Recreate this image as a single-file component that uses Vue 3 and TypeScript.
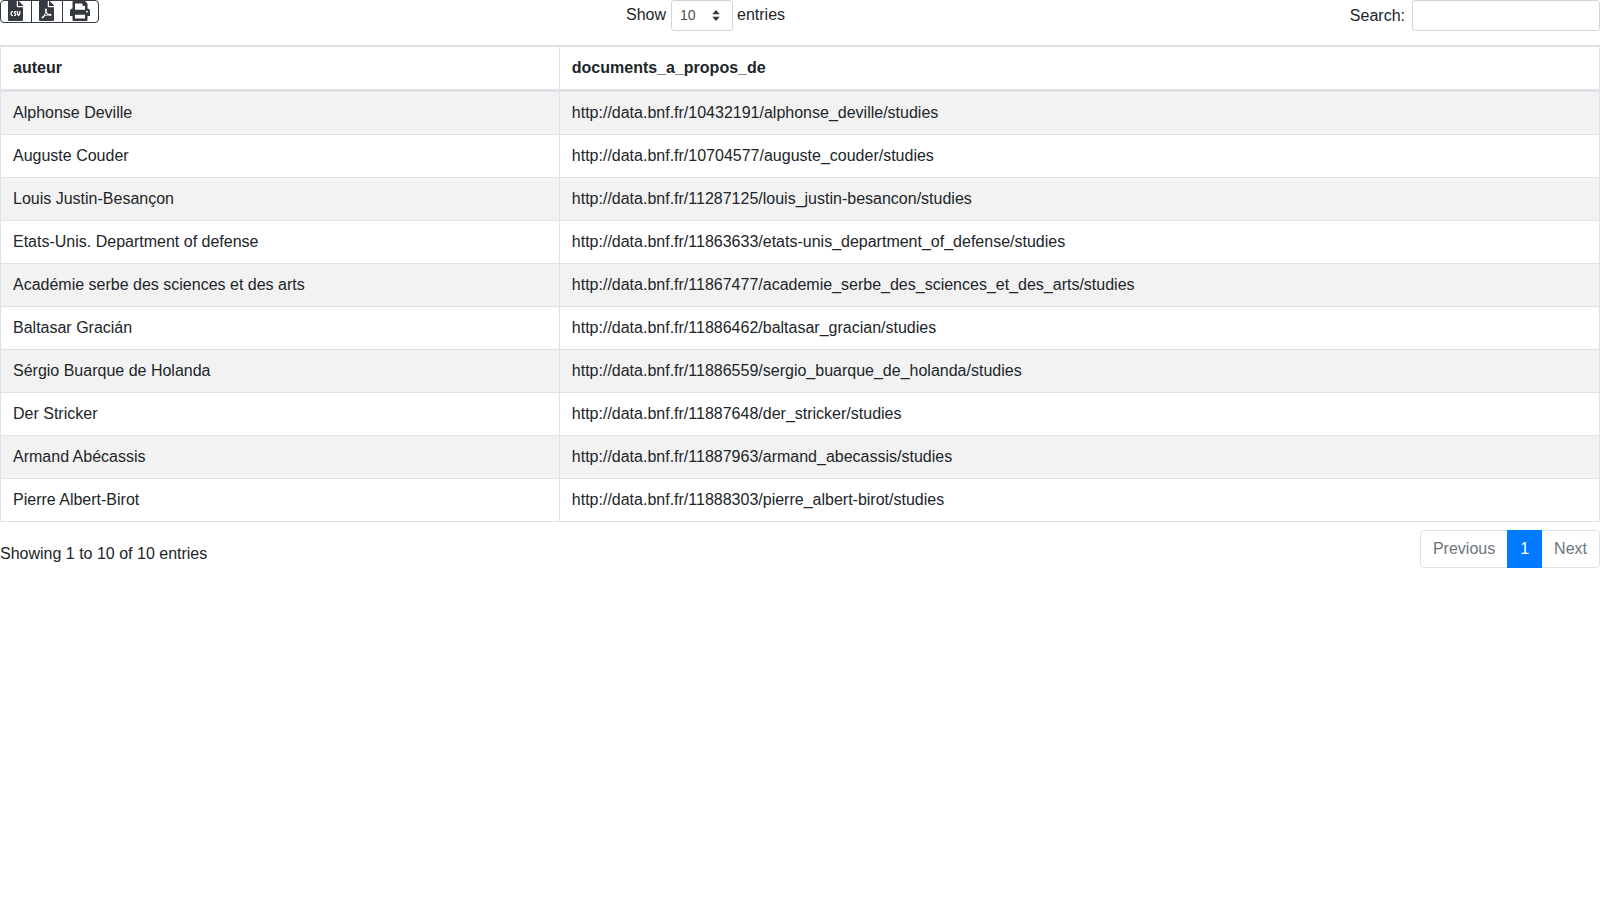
<script setup lang="ts">
const rows: [string, string][] = [
  ['Alphonse Deville', 'http://data.bnf.fr/10432191/alphonse_deville/studies'],
  ['Auguste Couder', 'http://data.bnf.fr/10704577/auguste_couder/studies'],
  ['Louis Justin-Besançon', 'http://data.bnf.fr/11287125/louis_justin-besancon/studies'],
  ['Etats-Unis. Department of defense', 'http://data.bnf.fr/11863633/etats-unis_department_of_defense/studies'],
  ['Académie serbe des sciences et des arts', 'http://data.bnf.fr/11867477/academie_serbe_des_sciences_et_des_arts/studies'],
  ['Baltasar Gracián', 'http://data.bnf.fr/11886462/baltasar_gracian/studies'],
  ['Sérgio Buarque de Holanda', 'http://data.bnf.fr/11886559/sergio_buarque_de_holanda/studies'],
  ['Der Stricker', 'http://data.bnf.fr/11887648/der_stricker/studies'],
  ['Armand Abécassis', 'http://data.bnf.fr/11887963/armand_abecassis/studies'],
  ['Pierre Albert-Birot', 'http://data.bnf.fr/11888303/pierre_albert-birot/studies'],
]
</script>

<template>
  <div class="page">
    <div class="top">
      <div class="tools">
        <button class="tool" type="button" aria-label="CSV">
          <svg class="file" viewBox="0 0 384 512"><path d="M224 136V0H24C10.7 0 0 10.7 0 24v464c0 13.3 10.7 24 24 24h336c13.3 0 24-10.7 24-24V160H248c-13.2 0-24-10.8-24-24zm-96 144c0 4.42-3.58 8-8 8h-8c-8.84 0-16 7.16-16 16v32c0 8.84 7.16 16 16 16h8c4.42 0 8 3.58 8 8v16c0 4.42-3.58 8-8 8h-8c-26.51 0-48-21.49-48-48v-32c0-26.51 21.49-48 48-48h8c4.42 0 8 3.58 8 8v16zm44.27 104H160c-4.42 0-8-3.58-8-8v-16c0-4.42 3.58-8 8-8h12.27c5.95 0 10.41-3.5 10.41-6.62 0-1.3-.75-2.66-2.12-3.84l-21.89-18.77c-8.47-7.22-13.33-17.48-13.33-28.14 0-21.3 19.02-38.62 42.41-38.62H200c4.42 0 8 3.58 8 8v16c0 4.42-3.58 8-8 8h-12.27c-5.95 0-10.41 3.5-10.41 6.62 0 1.3.75 2.66 2.12 3.84l21.89 18.77c8.47 7.22 13.33 17.48 13.33 28.14.01 21.29-19 38.62-42.39 38.62zM256 264v20.8c0 20.27 5.7 40.17 16 56.88 10.3-16.7 16-36.61 16-56.88V264c0-4.42 3.58-8 8-8h16c4.42 0 8 3.58 8 8v20.8c0 35.48-12.88 68.89-36.28 94.09-3.02 3.25-7.27 5.11-11.72 5.11s-8.7-1.86-11.72-5.11c-23.4-25.2-36.28-58.61-36.28-94.09V264c0-4.42 3.58-8 8-8h16c4.42 0 8 3.58 8 8zm121-159L279.1 7c-4.5-4.5-10.6-7-17-7H256v128h128v-6.1c0-6.3-2.5-12.4-7-16.9z"/></svg>
        </button>
        <button class="tool" type="button" aria-label="PDF">
          <svg class="file" viewBox="0 0 384 512"><path d="M181.9 256.1c-5-16-4.9-46.9-2-46.9 8.4 0 7.6 36.9 2 46.9zm-1.7 47.2c-7.7 20.2-17.3 43.3-28.4 62.7 18.3-7 39-17.2 62.9-21.9-12.7-9.6-24.9-23.4-34.5-40.8zM86.1 428.1c0 .8 13.2-5.4 34.9-40.2-6.7 6.3-29.1 24.5-34.9 40.2zM248 160h136v328c0 13.3-10.7 24-24 24H24c-13.3 0-24-10.7-24-24V24C0 10.7 10.7 0 24 0h200v136c0 13.2 10.8 24 24 24zm-8 171.8c-20-12.2-33.3-29-42.7-53.8 4.5-18.5 11.6-46.6 6.2-64.2-4.7-29.4-42.4-26.5-47.8-6.8-5 18.3-.4 44.1 8.1 77-11.6 27.6-28.7 64.6-40.8 85.8-.1 0-.1.1-.2.1-27.1 13.9-73.6 44.5-54.5 68 5.6 6.9 16 10 21.5 10 17.9 0 35.7-18 61.1-61.8 25.8-8.5 54.1-19.1 79-23.2 21.7 11.8 47.1 19.5 64 19.5 29.2 0 31.2-32 19.7-43.4-13.9-13.6-54.3-9.7-73.6-7.2zM377 105L279 7c-4.5-4.5-10.6-7-17-7h-6v128h128v-6.1c0-6.3-2.5-12.4-7-16.9zm-74.1 255.3c4.1-2.7-2.5-11.9-42.8-9 37.1 15.8 42.8 9 42.8 9z"/></svg>
        </button>
        <button class="tool" type="button" aria-label="Print">
          <svg class="printer" viewBox="0 0 512 512"><path d="M448 192V77.25c0-8.49-3.37-16.62-9.37-22.63L393.37 9.37c-6-6-14.14-9.37-22.63-9.37H96C78.33 0 64 14.33 64 32v160c-35.35 0-64 28.65-64 64v112c0 8.84 7.16 16 16 16h48v96c0 17.67 14.33 32 32 32h320c17.67 0 32-14.33 32-32v-96h48c8.84 0 16-7.16 16-16V256c0-35.35-28.65-64-64-64zm-64 256H128v-96h256v96zm0-224H128V64h192v48c0 8.84 7.16 16 16 16h48v96zm48 72c-13.25 0-24-10.75-24-24 0-13.27 10.75-24 24-24s24 10.73 24 24c0 13.25-10.75 24-24 24z"/></svg>
        </button>
      </div>
      <div class="length">
        <span>Show</span>
        <div class="select">
          <span>10</span>
          <svg viewBox="0 0 8 12" class="caret"><path d="M4 0 8 4.6H0zM4 12 0 7.4H8z"/></svg>
        </div>
        <span>entries</span>
      </div>
      <div class="search">
        <span>Search:</span>
        <input class="search-input" type="search" aria-label="Search" />
      </div>
    </div>

    <table class="data">
      <thead>
        <tr>
          <th class="col-a">auteur</th>
          <th>documents_a_propos_de</th>
        </tr>
      </thead>
      <tbody>
        <tr v-for="row in rows" :key="row[1]">
          <td>{{ row[0] }}</td>
          <td>{{ row[1] }}</td>
        </tr>
      </tbody>
    </table>

    <div class="bottom">
      <div class="info">Showing 1 to 10 of 10 entries</div>
      <nav class="pager">
        <a class="pg first">Previous</a>
        <a class="pg current">1</a>
        <a class="pg last">Next</a>
      </nav>
    </div>
  </div>
</template>

<style>
html, body { margin: 0; background: #fff; }
</style>

<style scoped>
.page {
  font-family: "Liberation Sans", Arial, sans-serif;
  font-size: 16px;
  line-height: 24px;
  color: #212529;
}
.top {
  display: grid;
  grid-template-columns: 626px auto 1fr;
  height: 45px;
  align-items: start;
}
.tools { display: flex; }
.tool {
  display: flex;
  justify-content: center;
  align-items: flex-start;
  height: 23px;
  padding: 0 2px 0 0;
  margin: 0 0 0 -1px;
  border: 1px solid #343a40;
  background: #fff;
  box-sizing: border-box;
  width: 32px;
}
.tool:first-child { margin-left: 0; border-radius: 4px 0 0 4px; }
.tool:last-child { border-radius: 0 4px 4px 0; width: 37px; }
.tool svg { fill: #343a40; display: block; margin-top: -0.5px; }
.file { width: 15px; height: 20px; }
.printer { width: 20px; height: 20px; }
.length { display: flex; align-items: flex-start; gap: 5px; height: 31px; line-height: 30px; }
.select {
  box-sizing: border-box;
  width: 62px;
  height: 31px;
  border: 1px solid #ced4da;
  border-radius: 3.2px;
  padding: 0 7px 0 8px;
  margin-right: -1px;
  font-size: 14px;
  line-height: 29px;
  color: #495057;
  display: flex;
  justify-content: space-between;
  align-items: center;
}
.caret { width: 8px; height: 11px; fill: #343a40; margin-right: 5px; }
.search { display: flex; justify-content: flex-end; gap: 7px; line-height: 31px; }
.search-input {
  box-sizing: border-box;
  width: 188px;
  height: 31px;
  border: 1px solid #ced4da;
  border-radius: 3.2px;
  padding: 4px 8px;
  font: inherit;
  font-size: 14px;
  color: #495057;
  outline: none;
}
.data {
  width: 100%;
  border-collapse: collapse;
  table-layout: fixed;
  border: 1px solid #dee2e6;
}
th, td {
  border: 1px solid #dee2e6;
  padding: 9px 12px;
  text-align: left;
  box-sizing: border-box;
}
th { border-top-width: 2px; border-bottom-width: 3px; font-weight: 700; }
.col-a { width: 558.8px; }
tbody tr:nth-child(odd) td { background: #f2f2f2; }
.bottom {
  display: flex;
  justify-content: space-between;
  align-items: flex-start;
  margin-top: 8px;
}
.info { padding-top: 12px; }
.pager { display: flex; }
.pg {
  box-sizing: border-box;
  height: 38px;
  padding: 6px 12px;
  border: 1px solid #dee2e6;
  margin-left: -1px;
  color: #6c757d;
  background: #fff;
}
.first { border-radius: 4px 0 0 4px; }
.last { border-radius: 0 4px 4px 0; }
.current { position: relative; z-index: 1; background: #007bff; border-color: #007bff; color: #fff; }
</style>
